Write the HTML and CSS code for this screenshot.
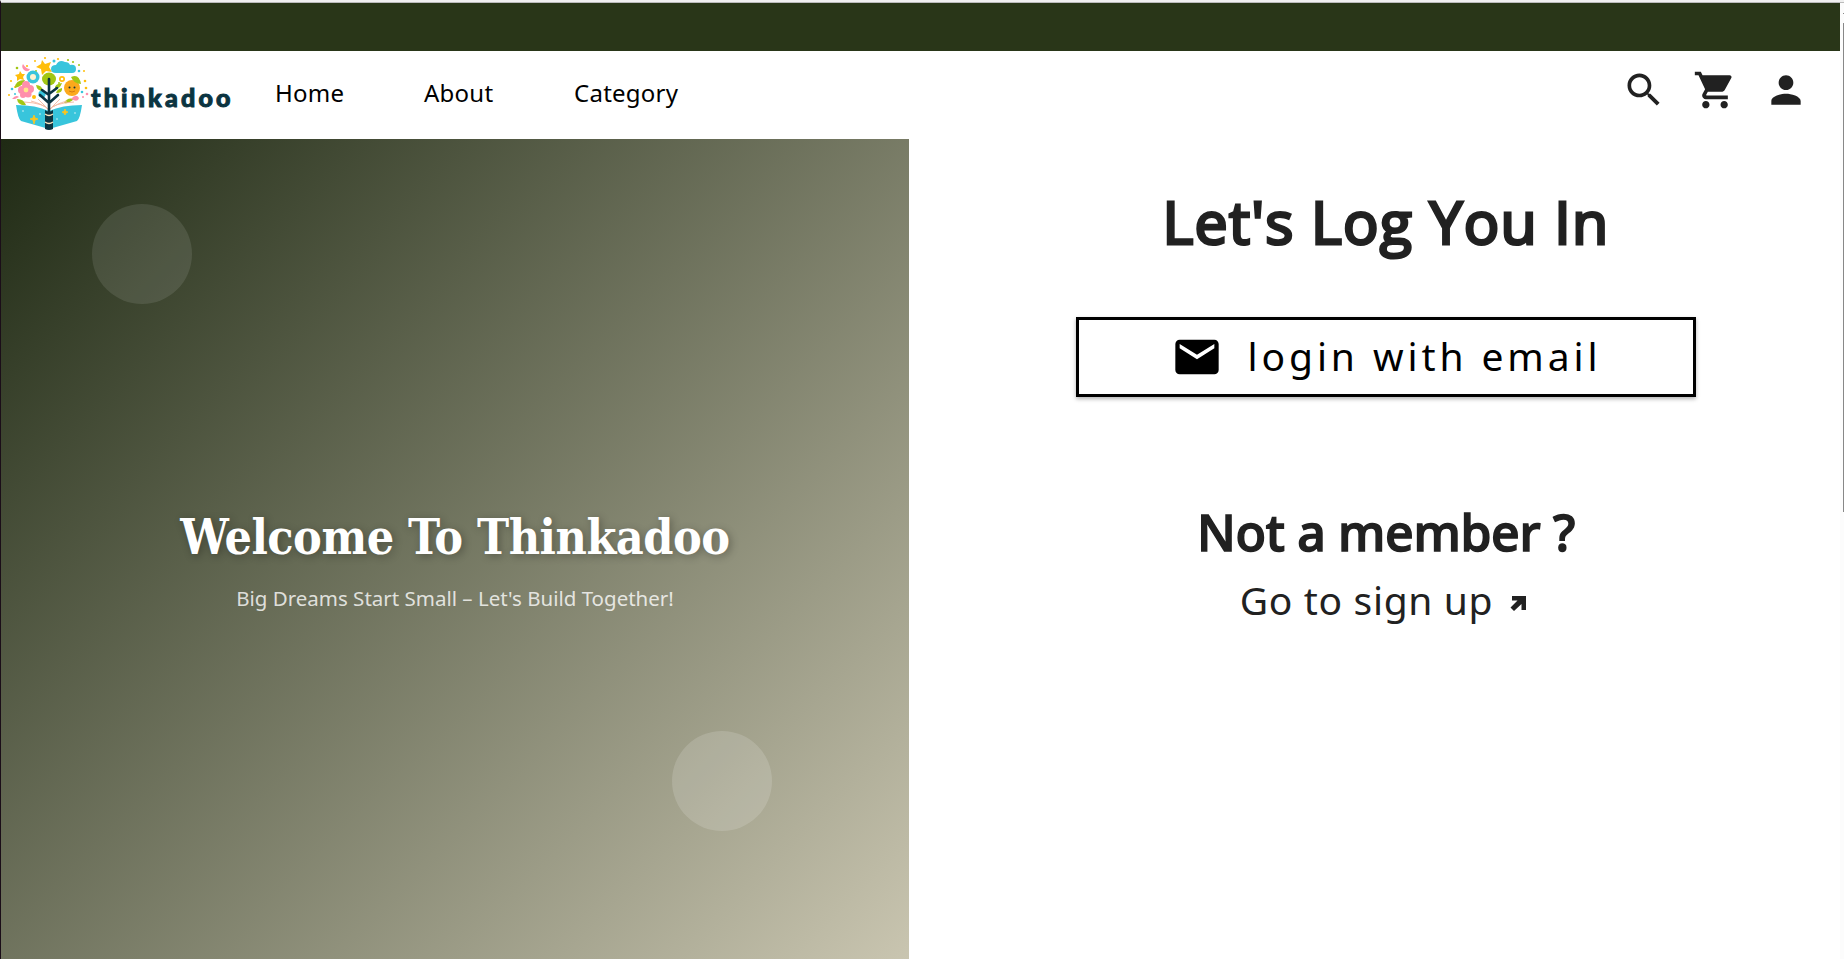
FILE: index.html
```html
<!DOCTYPE html>
<html lang="en">
<head>
<meta charset="utf-8">
<title>Thinkadoo</title>
<link rel="stylesheet" href="styles.css">
</head>
<body>
<div class="window">
  <div class="page">
    <div class="announcement"></div>
    <header class="header">
      <a class="brand">
        <svg class="brand-mark" viewBox="0 0 82 78" width="82" height="78">
          <g fill="#ffbe0b">
            <path d="M34 4l3 4 6-2-2 5 3 5-6-1-4 4-1-6-5-2 5-3z"/>
            <path d="M12 15l2 3 3 0-2 3 1 3-4-1-3 2 0-4-2-2 4-1z"/>
            <circle cx="64" cy="32" r="8" fill="#fca91c"/>
            <circle cx="54" cy="23" r="3"/><circle cx="26" cy="41" r="2"/>
            <circle cx="19" cy="10" r="1.1"/><circle cx="37" cy="2" r="1.1"/><circle cx="50" cy="3" r="1.1"/><circle cx="27" cy="5" r="1"/>
            <circle cx="77" cy="25" r="1.3"/><circle cx="78" cy="32" r="1.3"/><circle cx="3" cy="25" r="1.1"/><circle cx="1" cy="39" r="1"/><circle cx="76" cy="15" r="1"/><circle cx="7" cy="31" r="1"/>
          </g>
          <g fill="#a2c614">
            <ellipse cx="41" cy="23" rx="7" ry="6.5"/>
            <path d="M7 32q0-8 10-8-2 6-10 8z"/><path d="M63 21q8-4 10 7-7 0-10-7z"/>
            <path d="M28 29q6 0 7 6-6 0-7-6zM54 27q-8 1-7 6 5 0 7-6zM54 32q1 5-6 5 1-4 6-5zM9 43q7 0 9 6-8 1-9-6zM66 43q-5 5-10 4 3-6 10-4z"/>
            <circle cx="9" cy="12" r="1.3"/><circle cx="60" cy="4" r="1.1"/><circle cx="65" cy="6" r="1.1"/><circle cx="71" cy="9" r="1"/><circle cx="51" cy="27" r="1"/><circle cx="28" cy="15" r="1"/>
          </g>
          <g fill="#ff8fab">
            <circle cx="18" cy="29" r="4"/><circle cx="14" cy="34" r="4"/><circle cx="22" cy="33" r="4"/><circle cx="20" cy="38" r="3.6"/><circle cx="15" cy="39" r="3"/>
            <path d="M15 8q3 5 7 5-2 4-6 1-3-3-1-6zM4 43q4-5 7-2l-4 2zM63 43q5-6 8-1-1 5-8 1z"/><circle cx="79" cy="38" r="1.3"/><circle cx="75" cy="41" r="1"/>
          </g>
          <g fill="#38c5dc">
            <circle cx="25" cy="21" r="6.5"/><path d="M48 17q-5 0-5-4t5-4q3-6 9-3 4 0 5 3 6-1 6 4 0 4-4 4z"/><circle cx="34" cy="38" r="3.6"/>
            <circle cx="4" cy="33" r="1.3"/><circle cx="46" cy="5" r="1.5"/><circle cx="71" cy="15" r="1.3"/><circle cx="74" cy="36" r="1.3"/><circle cx="7" cy="38" r="1"/>
            <path d="M8 49q20 0 33 6v18l-28-8q-3-2-5-16zM74 49q-20 0-33 6v18l28-8q3-2 5-16z"/>
          </g>
          <path d="M16 46q20 1 25 8 5-7 25-8M23 45q12 3 18 9 6-6 18-9M30 43l11 11 11-11" fill="none" stroke="#f2b8a0" stroke-width=".9"/>
          <circle cx="25" cy="21" r="3" fill="#fff3d0"/><circle cx="18" cy="34" r="2.4" fill="#ffe58a"/><circle cx="54" cy="23" r="1.3" fill="#fff"/>
          <circle cx="61.500" cy="31.500" r="1" fill="#15333d"/><circle cx="66.500" cy="31.500" r="1" fill="#15333d"/>
          <path d="M61 35q3 2 6 0" fill="none" stroke="#d57b10"/>
          <path d="M41 23v33M41 47l-9-8M41 39l-7-5M41 47l9-8M41 38l8-6" fill="none" stroke="#0b3441" stroke-width="2.600" stroke-linecap="round"/>
          <path d="M37 54q4 3 8 0v19q-4 2-8 0z" fill="#0b3441"/>
          <path d="M37 58q4 3 8 0M37 66q4 3 8 0" fill="none" stroke="#ffe4bd" stroke-width="1.300"/>
          <path d="M26 59l1 3 3 1-3 1-1 4-1-4-3-1 3-1zM57 53l1 2.500 2 .5-2 1-1 2-1-2-2-1 2-.5z" fill="#ffc51b" stroke="#ffc51b" stroke-width=".8"/>
          <g fill="#fff"><circle cx="15" cy="55" r=".7"/><circle cx="32" cy="58" r=".7"/><circle cx="49" cy="63" r=".7"/><circle cx="67" cy="57" r=".7"/></g>
        </svg>
        <span class="brand-name">thinkadoo</span>
      </a>
      <nav class="nav">
        <a class="nav-link nav-home">Home</a>
        <a class="nav-link nav-about">About</a>
        <a class="nav-link">Category</a>
      </nav>
      <div class="actions">
        <svg class="icon" viewBox="0 0 24 24"><path d="M15.500 14h-.79l-.28-.27C15.410 12.590 16 11.110 16 9.500 16 5.910 13.090 3 9.500 3S3 5.910 3 9.500 5.910 16 9.500 16c1.610 0 3.090-.59 4.230-1.570l.27.28v.79l5 4.990L20.490 19l-4.990-5zm-6 0C7.010 14 5 11.990 5 9.500S7.010 5 9.500 5 14 7.010 14 9.500 11.990 14 9.500 14z"/></svg>
        <svg class="icon" viewBox="0 0 24 24"><path d="M7 18c-1.100 0-1.990.9-1.990 2S5.900 22 7 22s2-.9 2-2-.9-2-2-2zM1 2v2h2l3.600 7.590-1.350 2.450c-.16.28-.25.61-.25.96 0 1.100.9 2 2 2h12v-2H7.420c-.14 0-.25-.11-.25-.25l.03-.12.9-1.630h7.450c.75 0 1.410-.41 1.750-1.030l3.580-6.490c.08-.14.12-.31.12-.48 0-.55-.45-1-1-1H5.210l-.94-2H1zm16 16c-1.100 0-1.990.9-1.990 2s.89 2 1.990 2 2-.9 2-2-.9-2-2-2z"/></svg>
        <svg class="icon" viewBox="0 0 24 24"><path d="M12 12c2.210 0 4-1.790 4-4s-1.790-4-4-4-4 1.790-4 4 1.790 4 4 4zm0 2c-2.670 0-8 1.340-8 4v2h16v-2c0-2.660-5.330-4-8-4z"/></svg>
      </div>
    </header>
    <main class="main">
      <section class="welcome">
        <span class="bubble bubble-top"></span>
        <span class="bubble bubble-bottom"></span>
        <h1 class="welcome-title">Welcome To Thinkadoo</h1>
        <p class="welcome-text">Big Dreams Start Small – Let's Build Together!</p>
      </section>
      <section class="login">
        <h2 class="login-title">Let's Log You In</h2>
        <button class="login-button">
          <svg class="mail" viewBox="0 0 24 24"><path d="M20 4H4c-1.100 0-1.990.9-1.990 2L2 18c0 1.100.9 2 2 2h16c1.100 0 2-.9 2-2V6c0-1.100-.9-2-2-2zm0 4l-8 5-8-5V6l8 5 8-5v2z"/></svg>
          <span class="login-label">login with email</span>
        </button>
        <h3 class="member-title">Not a member ?</h3>
        <a class="signup"><span class="signup-label">Go to sign up</span>
          <svg class="arrow" viewBox="0 0 16 15"><path d="M2 0h14v14h-4.500V8L4 15 .5 11.500 7.500 4.500H2z"/></svg>
        </a>
      </section>
    </main>
  </div>
  <div class="scrollbar"><span class="scroll-up"></span><span class="scroll-thumb"></span></div>
</div>
</body>
</html>
```
FILE: styles.css
```css
* { box-sizing: border-box; }
body {
  margin: 0;
  height: 959px;
  overflow: hidden;
  background: #fff;
  color: #212121;
  font-family: "Noto Sans", "Open Sans", sans-serif;
}
.window {
  display: flex;
  height: 959px;
  border-top: 2px solid #f0f0f0;
  border-left: 1px solid #1a0d18;
}
.page {
  flex: 1;
  display: flex;
  flex-direction: column;
  border-top: 1px solid #bbb;
}
.scrollbar {
  width: 4px;
  background: #fcfcfc;
  display: flex;
  flex-direction: column;
  align-items: flex-end;
  border-top: 1px solid #bbb;
}
.scroll-up { width: 1px; height: 1px; margin-top: 10px; background: #888; }
.scroll-thumb { width: 1px; height: 489px; margin-top: 9px; background: #888; }
.announcement { height: 48px; background: #293618; }
.header {
  height: 88px;
  display: flex;
  align-items: center;
  background: #fff;
}
.brand { display: flex; width: 274px; padding-left: 7px; margin-top: -1px; }
.brand-mark { display: block; flex: none; }
.brand-name {
  align-self: center;
  font: 900 25px/30px Lato, sans-serif;
  letter-spacing: 3.2px;
  color: #0b3441;
  -webkit-text-stroke: 1px #0b3441;
  margin: 4px 0 0 1px;
}
.nav {
  display: flex;
  margin-top: -4px;
  font-size: 24px;
  line-height: 30px;
  letter-spacing: 0.25px;
  color: #000;
}
.nav-link { white-space: nowrap; }
.nav-home { width: 149px; }
.nav-about { width: 150px; }
.actions { display: flex; gap: 27px; margin: -10px 32px 0 auto; }
.icon { width: 44px; height: 44px; fill: #212121; }
.main { flex: 1; display: flex; }
.welcome {
  position: relative;
  width: 908px;
  padding-top: 366px;
  background: linear-gradient(135deg, #1f2a14, #c9c5b0);
  text-align: center;
}
.bubble {
  position: absolute;
  width: 100px;
  height: 100px;
  border-radius: 50%;
  background: rgba(255, 255, 255, 0.15);
}
.bubble-top { top: 64.500px; left: 91px; background: rgba(255, 255, 255, 0.1); }
.bubble-bottom { top: 591.500px; left: 671px; }
.welcome-title {
  margin: 0;
  font: bold 48px/64px "DejaVu Serif Condensed", "DejaVu Serif", serif;
  letter-spacing: -0.5px;
  white-space: nowrap;
  color: #fff;
  text-shadow: 2px 2px 8px rgba(0, 0, 0, 0.3);
}
.welcome-text {
  margin: 14px 0 0;
  font-size: 20.500px;
  line-height: 30px;
  color: rgba(255, 255, 255, 0.8);
}
.login {
  flex: 1;
  display: flex;
  flex-direction: column;
  align-items: center;
  padding: 42px 0 0 23px;
}
.login-title {
  margin: 0;
  font-family: "Open Sans", sans-serif;
  font-size: 59px;
  font-weight: 500;
  line-height: 80px;
  letter-spacing: 1.2px;
  -webkit-text-stroke: 3px #212121;
}
.login-button {
  display: flex;
  align-items: center;
  justify-content: center;
  gap: 25px;
  width: 620px;
  height: 80px;
  margin-top: 56px;
  padding: 0;
  border: 3px solid #000;
  background: #fff;
  box-shadow: 0 2px 4px rgba(0, 0, 0, 0.3);
  color: #000;
  font: 39px/50px "Noto Sans", sans-serif;
  letter-spacing: 3.9px;
}
.login-label { margin-top: -3px; }
.mail { width: 52px; height: 52px; flex: none; }
.member-title {
  margin: 100px 0 0;
  font-size: 50px;
  font-weight: 500;
  line-height: 70px;
  letter-spacing: -0.35px;
  -webkit-text-stroke: 1.500px #212121;
}
.signup {
  display: flex;
  align-items: center;
  gap: 17px;
  font-size: 39px;
  line-height: 60px;
  letter-spacing: 0.65px;
  margin: 3px 6px 0 0;
}
.arrow { width: 16px; height: 15px; fill: #212121; margin-top: 7px; }
```
